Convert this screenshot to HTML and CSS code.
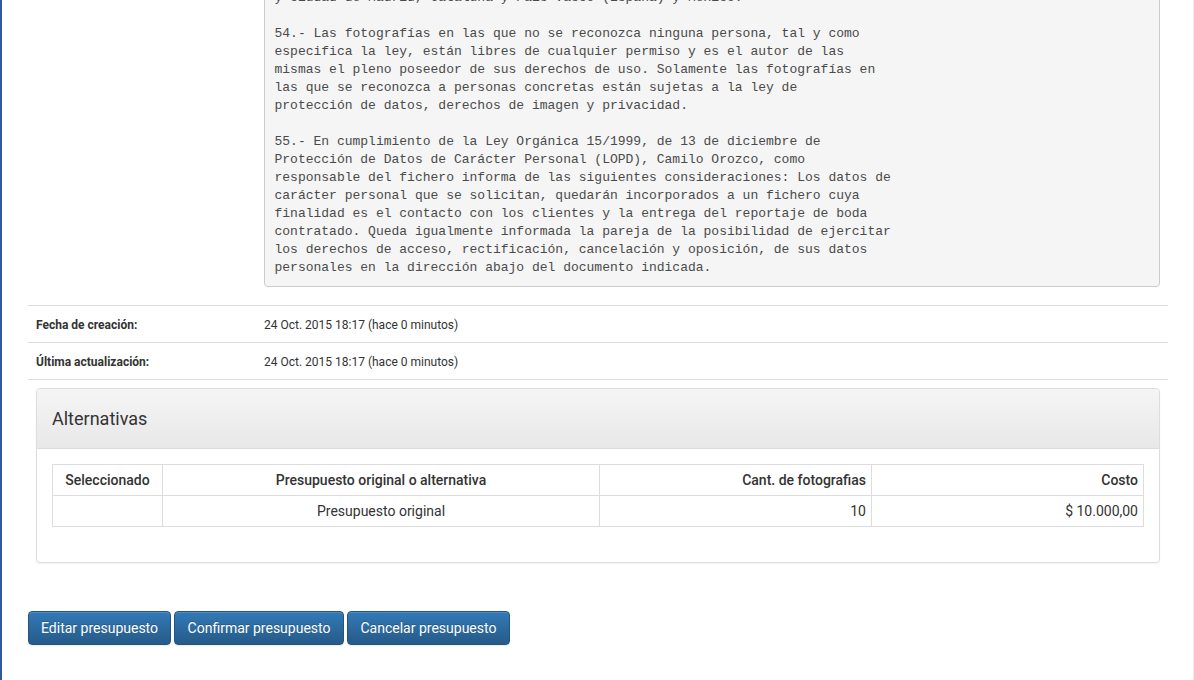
FILE: index.html
```html
<!DOCTYPE html>
<html lang="es">
<head>
<meta charset="utf-8">
<title>Presupuesto</title>
<link rel="stylesheet" href="styles.css">
</head>
<body>
<div class="page">
  <table class="details">
    <tbody>
      <tr>
        <th class="label pre-cell"></th>
        <td class="value pre-cell">
<pre class="terms">y ciudad de Madrid, Cataluña y País Vasco (España) y México.

54.- Las fotografías en las que no se reconozca ninguna persona, tal y como
especifica la ley, están libres de cualquier permiso y es el autor de las
mismas el pleno poseedor de sus derechos de uso. Solamente las fotografías en
las que se reconozca a personas concretas están sujetas a la ley de
protección de datos, derechos de imagen y privacidad.

55.- En cumplimiento de la Ley Orgánica 15/1999, de 13 de diciembre de
Protección de Datos de Carácter Personal (LOPD), Camilo Orozco, como
responsable del fichero informa de las siguientes consideraciones: Los datos de
carácter personal que se solicitan, quedarán incorporados a un fichero cuya
finalidad es el contacto con los clientes y la entrega del reportaje de boda
contratado. Queda igualmente informada la pareja de la posibilidad de ejercitar
los derechos de acceso, rectificación, cancelación y oposición, de sus datos
personales en la dirección abajo del documento indicada.</pre>
        </td>
      </tr>
      <tr>
        <th class="label">Fecha de creación:</th>
        <td class="value">24 Oct. 2015 18:17 (hace 0 minutos)</td>
      </tr>
      <tr>
        <th class="label">Última actualización:</th>
        <td class="value">24 Oct. 2015 18:17 (hace 0 minutos)</td>
      </tr>
      <tr>
        <td class="panel-cell" colspan="2">
          <div class="panel">
            <div class="panel-heading">
              <h3 class="panel-title">Alternativas</h3>
            </div>
            <div class="panel-body">
              <table class="alt-table">
                <thead>
                  <tr>
                    <th class="c1 center">Seleccionado</th>
                    <th class="c2 center">Presupuesto original o alternativa</th>
                    <th class="c3 right">Cant. de fotografias</th>
                    <th class="c4 right">Costo</th>
                  </tr>
                </thead>
                <tbody>
                  <tr>
                    <td class="center"></td>
                    <td class="center">Presupuesto original</td>
                    <td class="right">10</td>
                    <td class="right">$ 10.000,00</td>
                  </tr>
                </tbody>
              </table>
            </div>
          </div>
        </td>
      </tr>
    </tbody>
  </table>

  <div class="actions">
    <button class="btn">Editar presupuesto</button>
    <button class="btn btn-wide">Confirmar presupuesto</button>
    <button class="btn btn-wide">Cancelar presupuesto</button>
  </div>
</div>
</body>
</html>
```

FILE: styles.css
```css
* { box-sizing: border-box; }

html, body {
  margin: 0;
  padding: 0;
  background: #fff;
  height: 100%;
  overflow: hidden;
}

body {
  font-family: Roboto, "Liberation Sans", Arial, sans-serif;
  font-size: 14px;
  line-height: 20px;
  color: #333;
}

.page {
  min-height: calc(100vh + 60px);
  border-left: 2px solid #2d5a9e;
  border-right: 1px solid #eeeeee;
  padding: 0 25px 0 26px;
}

.details {
  width: 100%;
  border-collapse: collapse;
  border-spacing: 0;
  margin-top: -31px;
  margin-bottom: 20px;
}

.details th,
.details td {
  border-top: 1px solid #dddddd;
  padding: 9px 8px 7px;
  vertical-align: top;
  font-size: 12px;
  line-height: 20px;
  text-align: left;
}

.details .label {
  width: 228px;
  font-weight: 700;
}

.details .pre-cell {
  padding: 8px;
}

.terms {
  margin: 0 0 10px;
  padding: 9.5px;
  background: #f5f5f5;
  border: 1px solid #cccccc;
  border-radius: 4px;
  font-family: "Liberation Mono", "Courier New", monospace;
  font-size: 13px;
  line-height: 18px;
  color: #4a4a4a;
  white-space: pre;
  overflow: hidden;
}

.details .panel-cell {
  padding: 8px;
}

.panel {
  border: 1px solid #dddddd;
  border-radius: 4px;
  box-shadow: 0 1px 2px rgba(0, 0, 0, 0.05);
  background: #fff;
  margin-bottom: 20px;
}

.panel-heading {
  padding: 15px 15px;
  background: linear-gradient(to bottom, #f5f5f5 0%, #e8e8e8 100%);
  border-bottom: 1px solid #dddddd;
  border-radius: 3px 3px 0 0;
}

.panel-title {
  margin: 0;
  font-size: 18px;
  line-height: 29px;
  font-weight: 400;
  color: #333;
}

.panel-body {
  padding: 15px;
}

.alt-table {
  width: 100%;
  border-collapse: collapse;
  margin-bottom: 20px;
}

.alt-table th,
.alt-table td {
  border: 1px solid #dddddd;
  padding: 5px;
  font-size: 14px;
  line-height: 20px;
}

.alt-table th {
  font-weight: 500;
}

.alt-table .c1 { width: 110px; }
.alt-table .c2 { width: 437px; }
.alt-table .c3 { width: 272px; }

.details .alt-table .center { text-align: center; }
.details .alt-table .right { text-align: right; }

.actions {
  display: flex;
  gap: 3px;
}

.btn {
  font-family: Roboto, "Liberation Sans", Arial, sans-serif;
  font-size: 14px;
  line-height: 20px;
  padding: 6px 12px;
  color: #fff;
  border: 1px solid #245580;
  border-radius: 4px;
  background: linear-gradient(to bottom, #337ab7 0%, #265a88 100%);
  text-shadow: 0 -1px 0 rgba(0, 0, 0, 0.2);
  box-shadow: inset 0 1px 0 rgba(255, 255, 255, 0.15), 0 1px 1px rgba(0, 0, 0, 0.075);
  cursor: pointer;
}

.btn-wide {
  padding-left: 12.5px;
  padding-right: 12.5px;
}
```
